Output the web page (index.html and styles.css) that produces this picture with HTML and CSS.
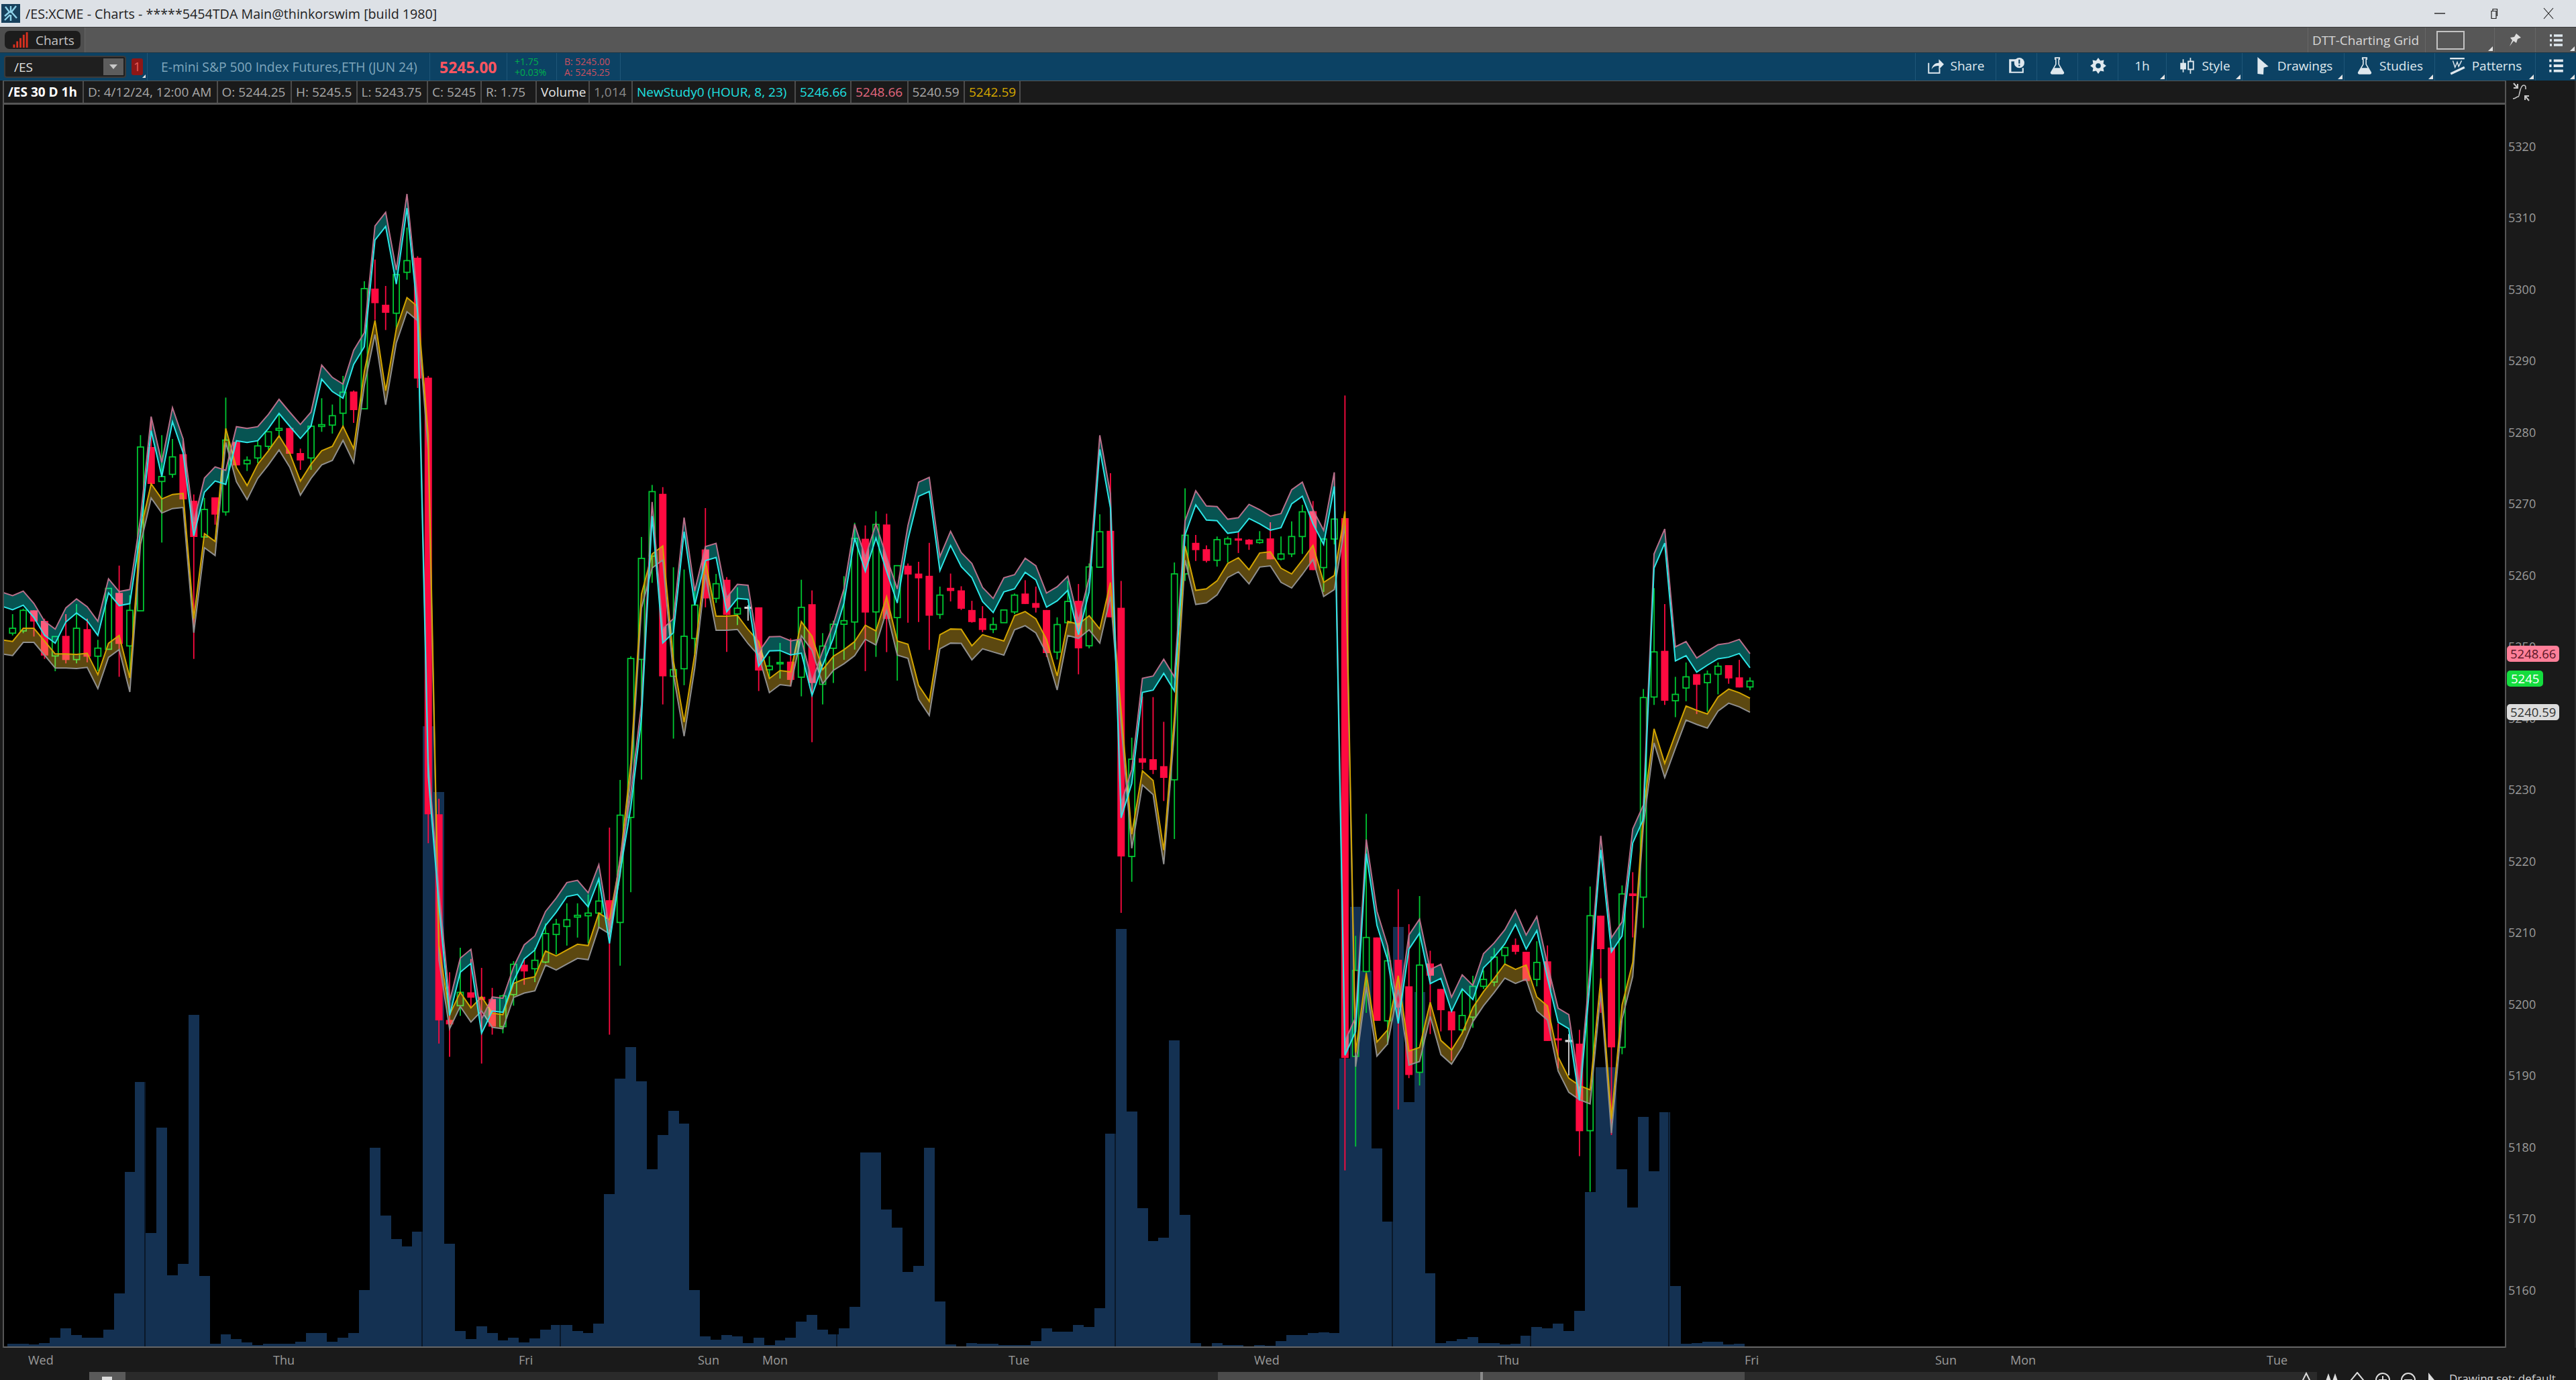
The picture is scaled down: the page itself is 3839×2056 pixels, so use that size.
FILE: index.html
```html
<!DOCTYPE html>
<html lang="en">
<head>
    <meta charset="UTF-8">
    <meta name="viewport" content="width=device-width, initial-scale=1.0">
    <title>/ES:XCME - Charts</title>
    <link rel="stylesheet" href="styles.css">
</head>
<body>
    <header class="titlebar">
        <svg class="app-logo" viewBox="0 0 28 28">
            <rect width="28" height="28" fill="#17405c"/>
            <path d="M6 4l6 8-7 6M22 3l-7 9 8 9M12 12l3 0M14 3v8M14 16v9M5 24l8-8" stroke="#8fd3ea" stroke-width="2.4" fill="none"/>
        </svg>
        <span class="title-text">/ES:XCME - Charts - *****5454TDA Main@thinkorswim [build 1980]</span>
        <div class="window-controls">
            <svg viewBox="0 0 18 18"><path d="M1 9h16" stroke="#222" stroke-width="1.4"/></svg>
            <svg viewBox="0 0 18 18"><path d="M5 5.5h7v11H5zM7 5V2.500h6.500V13" stroke="#222" stroke-width="1.2" fill="none"/></svg>
            <svg viewBox="0 0 18 18"><path d="M2 1l14 16M16 1L2 17" stroke="#222" stroke-width="1.1"/></svg>
        </div>
    </header>

    <div class="tabrow">
        <div class="tab-cell">
            <div class="tab-btn">
                <svg class="bars-icon" viewBox="0 0 24 24">
                    <path d="M0 24v-5h3v5zM5 24V14h3v10zM10 24V9h3v15zM15 24V4h3v20zM20 24V0h3v24z" fill="#d8301f"/>
                </svg>
                <span>Charts</span>
            </div>
        </div>
        <div class="tab-right">
            <span class="grid-name">DTT-Charting Grid</span>
            <div class="grid-box corner"><span class="grid-square"></span></div>
            <div class="pin-box">
                <svg class="icon-sm" viewBox="0 0 24 24"><path d="M14 2l7 6-5 2-2 6-4-3-6 8 4-9-3-4 6-1z" fill="#ddd"/></svg>
            </div>
            <div class="pin-box menu-box corner">
                <svg class="icon-sm" viewBox="0 0 24 24"><use href="#list-icon"/></svg>
            </div>
        </div>
    </div>

    <div class="toolbar">
        <div class="symbol-box">
            <span>/ES</span>
            <span class="drop-btn"></span>
        </div>
        <div class="link-badge corner">1</div>
        <div class="quote-cell desc-cell">E-mini S&amp;P 500 Index Futures,ETH (JUN 24)</div>
        <div class="quote-cell last-cell">5245.00</div>
        <div class="quote-cell change-cell"><span>+1.75</span><span>+0.03%</span></div>
        <div class="quote-cell bidask-cell"><span>B: 5245.00</span><span>A: 5245.25</span></div>
        <div class="tools">
            <div class="tool">
                <svg class="icon" viewBox="0 0 24 24"><path d="M3 8v14h15v-6" stroke="#dfe8ee" stroke-width="1.8" fill="none"/><path d="M7 17c1-6 5-9 10-9V3l7 7-7 7v-5c-4 0-8 1-10 5z" fill="#dfe8ee"/></svg>
                <span>Share</span>
            </div>
            <div class="tool">
                <svg class="icon" viewBox="0 0 24 24"><path d="M2 3h12v3H5v14h15v-5h2v7H2z" fill="#dfe8ee"/><circle cx="16" cy="8" r="7" fill="#dfe8ee"/><path d="M16 3.500v5.500M16 10.500v2" stroke="#0c4264" stroke-width="2"/></svg>
            </div>
            <div class="tool">
                <svg class="icon" viewBox="0 0 24 24"><use href="#flask-icon"/></svg>
            </div>
            <div class="tool">
                <svg class="icon" viewBox="0 0 24 24">
                    <polygon points="12,1 14.9,5 19.800,4.200 19,9.100 23,12 19,14.900 19.800,19.800 14.900,19 12,23 9.100,19 4.200,19.800 5,14.900 1,12 5,9.100 4.200,4.200 9.100,5" fill="#dfe8ee"/>
                    <circle cx="12" cy="12" r="3.500" fill="#0c4264"/>
                </svg>
            </div>
            <div class="tool corner"><span>1h</span></div>
            <div class="tool corner">
                <svg class="icon" viewBox="0 0 24 24">
                    <path d="M7 3v18" stroke="#dfe8ee" stroke-width="1.6"/><rect x="3" y="8" width="8" height="9" fill="#dfe8ee"/>
                    <path d="M17 1v22" stroke="#dfe8ee" stroke-width="1.6"/><rect x="14" y="6" width="7" height="11" fill="#0c4264" stroke="#dfe8ee" stroke-width="1.8"/>
                </svg>
                <span>Style</span>
            </div>
            <div class="tool corner">
                <svg class="icon" viewBox="0 0 24 24"><path d="M5 0l15 13-6.500 1.500L13 24l-8-1z" fill="#dfe8ee"/></svg>
                <span>Drawings</span>
            </div>
            <div class="tool corner">
                <svg class="icon" viewBox="0 0 24 24"><use href="#flask-icon"/></svg>
                <span>Studies</span>
            </div>
            <div class="tool corner">
                <svg class="icon" viewBox="0 0 24 24">
                    <path d="M2 2h20" stroke="#dfe8ee" stroke-width="2.200"/>
                    <path d="M6 5l3 9 3-7 2 6 4-8" stroke="#dfe8ee" stroke-width="1.300" fill="none"/>
                    <path d="M3 23l19-9" stroke="#dfe8ee" stroke-width="3"/>
                </svg>
                <span>Patterns</span>
            </div>
            <div class="tool corner">
                <svg class="icon" viewBox="0 0 24 24"><use href="#list-icon"/></svg>
            </div>
        </div>
    </div>

    <div class="workspace">
        <div class="chart-col">
            <div class="legend">
                <span class="leg-cell leg-symbol">/ES 30 D 1h</span>
                <span class="leg-cell">D: 4/12/24, 12:00 AM</span>
                <span class="leg-cell">O: 5244.25</span>
                <span class="leg-cell">H: 5245.5</span>
                <span class="leg-cell">L: 5243.75</span>
                <span class="leg-cell">C: 5245</span>
                <span class="leg-cell">R: 1.75</span>
                <span class="leg-cell leg-white">Volume</span>
                <span class="leg-cell leg-dim">1,014</span>
                <span class="leg-cell leg-cyan">NewStudy0 (HOUR, 8, 23)</span>
                <span class="leg-cell leg-cyan">5246.66</span>
                <span class="leg-cell leg-pink">5248.66</span>
                <span class="leg-cell">5240.59</span>
                <span class="leg-cell leg-gold">5242.59</span>
                <span class="leg-rest"></span>
            </div>
            <svg id="plot" class="plot" viewBox="6 156 3727 1850"></svg>
        </div>

        <div class="price-axis">
            <svg class="fit-icon" viewBox="0 0 28 28" fill="none" stroke="#c8c8c8">
                <path d="M3 1l6 7M9 2v6H3" stroke-width="2"/>
                <path d="M2 24c5 0 5-3 8-3 2 0 2-17 8-17 3 0 3 2 3 6" stroke-width="1.600"/>
                <path d="M26 27l-6-7M20 26v-6h6" stroke-width="2"/>
            </svg>
            <div class="tick">5320</div>
            <div class="tick">5310</div>
            <div class="tick">5300</div>
            <div class="tick">5290</div>
            <div class="tick">5280</div>
            <div class="tick">5270</div>
            <div class="tick">5260</div>
            <div class="tick">5250</div>
            <div class="tick">5240</div>
            <div class="tick">5230</div>
            <div class="tick">5220</div>
            <div class="tick">5210</div>
            <div class="tick">5200</div>
            <div class="tick">5190</div>
            <div class="tick">5180</div>
            <div class="tick">5170</div>
            <div class="tick">5160</div>
            <span class="bubble bubble-pink">5248.66</span>
            <span class="bubble bubble-green">5245</span>
            <span class="bubble bubble-gray">5240.59</span>
        </div>
    </div>

    <div class="time-axis">
        <span class="day" style="width:365px">Wed</span>
        <span class="day" style="width:366px">Thu</span>
        <span class="day" style="width:267px">Fri</span>
        <span class="day" style="width:96px">Sun</span>
        <span class="day" style="width:367px">Mon</span>
        <span class="day" style="width:366px">Tue</span>
        <span class="day" style="width:363px">Wed</span>
        <span class="day" style="width:368px">Thu</span>
        <span class="day" style="width:284px">Fri</span>
        <span class="day" style="width:112px">Sun</span>
        <span class="day" style="width:382px">Mon</span>
        <span class="day">Tue</span>
    </div>

    <div class="scroll-row">
        <div class="scroll-btn"><span></span></div>
        <div class="scroll-track">
            <div class="scroll-thumb"></div>
        </div>
        <div class="status">
            <svg class="status-icon" viewBox="0 0 24 24"><path d="M12 2l10 20H2z" fill="none" stroke="#ddd" stroke-width="2"/></svg>
            <svg class="status-icon" viewBox="0 0 24 24"><path d="M7 2l7 20H0zM17 2l7 20H10z" fill="#ddd"/></svg>
            <svg class="status-icon" viewBox="0 0 24 24"><path d="M12 1l9 11-9 11-9-11z" fill="none" stroke="#ddd" stroke-width="2"/></svg>
            <svg class="status-icon" viewBox="0 0 24 24"><circle cx="12" cy="12" r="10" fill="none" stroke="#ddd" stroke-width="2"/><path d="M12 6v12M6 12h12" stroke="#ddd" stroke-width="2"/></svg>
            <svg class="status-icon" viewBox="0 0 24 24"><circle cx="12" cy="12" r="10" fill="none" stroke="#ddd" stroke-width="2"/><path d="M6 12h12" stroke="#ddd" stroke-width="2"/></svg>
            <svg class="status-icon" viewBox="0 0 24 24"><path d="M4 1l18 22H4z" fill="#ddd"/></svg>
            <span class="status-text">Drawing set: default</span>
        </div>
    </div>

    <svg class="defs" width="0" height="0">
        <symbol id="flask-icon" viewBox="0 0 24 24">
            <path d="M9 1h6v2h-1v7l6.500 11c.5 1.200-.2 2-1.500 2H5c-1.300 0-2-.8-1.500-2L10 10V3H9z" fill="none" stroke="#dfe8ee" stroke-width="1.500"/>
            <path d="M7.500 15h9l4 6c.5 1.200-.2 2-1.500 2H5c-1.300 0-2-.8-1.500-2z" fill="#dfe8ee"/>
        </symbol>
        <symbol id="list-icon" viewBox="0 0 24 24">
            <path d="M3 5h3M9 5h13M3 12h3M9 12h13M3 19h3M9 19h13" stroke="#dfe8ee" stroke-width="3.500"/>
        </symbol>
    </svg>

    <script src="chart.js"></script>
</body>
</html>
```

FILE: styles.css
```css
* {
    box-sizing: border-box;
}

html, body {
    margin: 0;
    height: 100%;
}

body {
    display: flex;
    flex-direction: column;
    height: 2056px;
    overflow: hidden;
    background-color: #1a1a1a;
    font-family: "Open Sans", sans-serif;
    font-size: 19px;
    color: #a8a8a8;
}

.defs {
    position: absolute;
}

/* window title */
.titlebar {
    display: flex;
    align-items: center;
    flex: 0 0 41px;
    padding-left: 2px;
    background-color: #dde1e6;
    border-bottom: 1px solid #3a3a3a;
    color: #222;
}

.app-logo {
    width: 28px;
    height: 28px;
}

.title-text {
    margin-left: 8px;
    font-size: 19.700px;
}

.window-controls {
    display: flex;
    gap: 63px;
    margin-left: auto;
    margin-right: 32px;
}

.window-controls svg {
    width: 18px;
    height: 18px;
}

/* tab row */
.tabrow {
    display: flex;
    flex: 0 0 37px;
    background-color: #575757;
}

.tab-cell {
    display: flex;
    align-items: center;
    width: 127px;
    padding-left: 7px;
    background-color: #4e4e4e;
    border-right: 1px solid #666;
}

.tab-btn {
    display: flex;
    align-items: center;
    gap: 10px;
    width: 113px;
    height: 27px;
    padding-left: 12px;
    background-color: #1c1c1c;
    border-radius: 7px;
    color: #c4c4c4;
}

.bars-icon {
    width: 24px;
    height: 23px;
}

.tab-right {
    display: flex;
    align-items: stretch;
    margin-left: auto;
    color: #d8d8d8;
}

.grid-name {
    display: flex;
    align-items: center;
    width: 176px;
    padding-left: 6px;
    border-left: 1px solid #666;
    border-right: 1px solid #666;
}

.grid-box {
    display: flex;
    align-items: center;
    width: 103px;
    padding-left: 16px;
    border-right: 1px solid #666;
}

.grid-square {
    width: 42px;
    height: 28px;
    border: 2px solid #c4c4c4;
}

.pin-box {
    display: flex;
    align-items: center;
    justify-content: center;
    width: 61px;
    border-right: 1px solid #666;
}

.menu-box {
    width: 60px;
    border-right: 0;
}

.icon-sm {
    width: 24px;
    height: 24px;
}

/* little white triangle in the lower corner of a menu button */
.corner {
    position: relative;
}

.corner::after {
    content: "";
    position: absolute;
    right: 2px;
    bottom: 2px;
    border-left: 7px solid transparent;
    border-bottom: 7px solid #e4e4e4;
}

/* blue toolbar */
.toolbar {
    display: flex;
    align-items: stretch;
    flex: 0 0 42px;
    background-color: #0c4264;
    border-top: 1px solid #1b3647;
}

.symbol-box {
    display: flex;
    align-items: center;
    justify-content: space-between;
    width: 182px;
    height: 33px;
    margin: 4px 0 0 6px;
    padding: 0 2px 0 13px;
    background-color: #1f1f1f;
    border: 2px solid #3a3a3a;
    border-radius: 4px;
    color: #e2e2e2;
}

.drop-btn {
    position: relative;
    width: 30px;
    height: 25px;
    background-color: #5d5d5d;
}

.drop-btn::after {
    content: "";
    position: absolute;
    left: 9px;
    top: 9px;
    border-left: 6px solid transparent;
    border-right: 6px solid transparent;
    border-top: 7px solid #c8c8c8;
}

.link-badge {
    align-self: center;
    width: 17px;
    height: 25px;
    margin: 0 6px 0 8px;
    background-color: #8e1717;
    border-radius: 3px;
    color: #e85a5a;
    line-height: 25px;
    text-align: center;
}

.link-badge::after {
    right: -4px;
    bottom: -4px;
    border-left-width: 5px;
    border-bottom-width: 5px;
}

.quote-cell {
    display: flex;
    align-items: center;
    border-left: 1px solid #1f5678;
}

.desc-cell {
    width: 421px;
    padding-left: 20px;
    color: #7fa6bc;
    font-size: 19.300px;
    white-space: nowrap;
}

.last-cell {
    width: 115px;
    padding-left: 14px;
    color: #ff5560;
    font-size: 23px;
    font-weight: 700;
}

.change-cell,
.bidask-cell {
    flex-direction: column;
    align-items: flex-start;
    justify-content: center;
    color: #00b04c;
    font-size: 14px;
    line-height: 16px;
}

.change-cell {
    width: 74px;
    padding-left: 11px;
}

.bidask-cell {
    width: 96px;
    padding-left: 11px;
    border-right: 1px solid #1f5678;
    color: #cc5060;
}

.tools {
    display: grid;
    grid-template-columns: 120px 61px 61px 60px 72px 113px 152px 135px 150px 61px;
    margin-left: auto;
}

.tool {
    display: flex;
    align-items: center;
    justify-content: center;
    gap: 9px;
    padding-bottom: 3px;
    border-left: 1px solid #1f5678;
    color: #dfe8ee;
}

.icon {
    width: 26px;
    height: 28px;
}

/* chart and axis */
.workspace {
    display: flex;
    flex: 1 1 auto;
    min-height: 0;
}

.chart-col {
    display: flex;
    flex-direction: column;
    flex: 1 1 auto;
    min-width: 0;
    margin-left: 4px;
    background-color: #000;
    border-left: 2px solid #555;
}

.legend {
    display: grid;
    grid-template-columns: 119px 199.500px 110.500px 97.500px 105.500px 80px 82px 79px 64px 243px 83px 84.500px 84.500px 83px 1fr;
    flex: 0 0 36px;
    background-color: #1a1a1a;
    border-top: 1px solid #555;
    border-bottom: 3px solid #555;
}

.leg-cell {
    padding-left: 6px;
    border-right: 2px solid #4c4c4c;
    line-height: 32px;
    white-space: nowrap;
    overflow: hidden;
}

.leg-symbol {
    color: #fff;
    font-weight: 700;
}

.leg-white {
    color: #e4e4e4;
}

.leg-dim {
    color: #8a8a8a;
}

.leg-cyan {
    color: #1fe0e0;
}

.leg-pink {
    color: #e2687f;
}

.leg-gold {
    color: #d6a800;
}

.plot {
    display: block;
    flex: 1 1 auto;
    min-height: 0;
    width: 100%;
    border-bottom: 2px solid #666;
    filter: blur(0.5px);
}

.plot .band {
    mix-blend-mode: screen;
}

.price-axis {
    position: relative;
    flex: 0 0 106px;
    padding: 44.750px 0 0 3px;
    border-left: 2px solid #555;
    border-right: 2px solid #2c2c2c;
    color: #9a9a9a;
    font-size: 18px;
}

.fit-icon {
    position: absolute;
    left: 8px;
    top: 3px;
    width: 28px;
    height: 28px;
}

.tick {
    height: 106.500px;
    line-height: 106.500px;
}

.bubble {
    position: absolute;
    left: 1px;
    padding: 0 5px;
    border-radius: 5px;
    font-size: 18.500px;
    line-height: 24px;
}

.bubble-pink {
    top: 842px;
    background-color: #ff7f99;
    color: #5a1526;
}

.bubble-green {
    top: 879px;
    padding: 0 6px;
    background-color: #14dc3e;
    color: #fff;
}

.bubble-gray {
    top: 929px;
    background-color: #dcdcdc;
    color: #333;
}

/* time axis and scroller */
.time-axis {
    display: flex;
    align-items: center;
    flex: 0 0 36px;
    padding-left: 42px;
    color: #9a9a9a;
    font-size: 18px;
}

.day {
    flex: none;
}

.scroll-row {
    display: flex;
    flex: 0 0 12px;
    overflow: hidden;
    background-color: #1a1a1a;
}

.scroll-btn {
    flex: none;
    width: 54px;
    height: 24px;
    margin-left: 133px;
    padding: 7px 0 0 19px;
    background-color: #5a5a5a;
}

.scroll-btn span {
    display: block;
    width: 15px;
    height: 5px;
    background-color: #ddd;
}

.scroll-track {
    flex: 0 0 3266px;
    padding-left: 1628px;
    background-color: #2a2a2a;
}

.scroll-thumb {
    position: relative;
    width: 785px;
    height: 24px;
    background-color: #4b4b4b;
}

.scroll-thumb::after {
    content: "";
    position: absolute;
    left: 391px;
    top: 0;
    width: 4px;
    height: 24px;
    background-color: #8a8a8a;
}

.status {
    display: flex;
    align-items: flex-start;
    gap: 14px;
    flex: none;
    margin-left: -28px;
    color: #d4d4d4;
    font-size: 17px;
}

.status-icon {
    width: 24px;
    height: 24px;
    flex: none;
}

.status-text {
    margin-left: -3px;
    line-height: 20px;
    white-space: nowrap;
}
```

FILE: chart.js
```js
// 30 days of hourly /ES, y values are kept as read per block: y = top + v / scale
const PITCH = 15.885;
const FIRST_X = 18.75;
const BAND = 21; // distance cyan-pink and gold-gray
const FLOOR = 2006;
const NS = "http://www.w3.org/2000/svg";

// candle: [direction, bodyTop, bodyBottom, wickTop, wickBottom], 1 up, 0 down, 2 doji
const blocks = [
    {
        top: 560, scale: 3,
        cyan: [1045,1025,1080,1160,1195,1100,1060,1095,1160,970,1027,1018,700,245,450,205,345,715,520,470,485,290,298,290,235,168,225,280,225,15,70,100,-51],
        gold: [1187,1128,1128,1185,1243,1243,1245,1240,1335,1195,1160,1350,690,483,550,530,525,1085,705,740,235,410,490,395,335,268,345,470,395,335,315,225,325],
        candles: [
            [1,1128,1150,1065,1160],[1,1048,1140,1040,1150],[0,1048,1098,1048,1165],[0,1095,1250,1085,1265],
            [1,1165,1252,1165,1320],[0,1162,1270,1065,1285],[1,1128,1268,1020,1285],[0,1132,1255,1085,1280],
            [1,1217,1253,1180,1320],[1,950,1222,950,1222],[0,970,1198,848,1345],[1,1048,1207,980,1350],
            [1,318,1050,265,1050],[0,318,483,200,490],[1,450,472,265,745],[1,362,440,282,455],
            [0,350,552,280,552],[0,558,720,530,1265],[1,597,720,545,720],[0,543,620,543,665],
            [1,287,608,97,625],[0,295,400,295,400],[1,377,393,360,425],[1,313,367,290,390],
            [1,250,315,250,330],[1,235,243,170,270],[0,233,348,233,348],[0,345,378,325,420],
            [1,225,367,225,420],[1,218,226,100,250],[1,178,220,128,258],[1,73,167,0,230],[0,70,153,65,210]
        ]
    },
    {
        top: 260, scale: 3,
        cyan: [770,293,232,490,150,620],
        gold: [880,652,966,690,550,590],
        candles: [
            [1,510,1047,477,1047],[0,510,575,380,650],[0,582,618,498,695],
            [1,447,620,447,690],[1,385,437,237,470],[0,372,912,365,954]
        ]
    },
    {
        top: 560, scale: 1.508,
        cyan: [900,1190,1437,1340,1320,1477,1427,1430,1360,1310,1290,1235,1205,1170,1165,1193,1130,1275,1115,970,770,315,600,577,350,515,415,408,530,500,502,652,618,617,627,623,718,650,590,510,365],
        gold: [135,1280,1435,1385,1420,1395,1432,1435,1365,1355,1350,1292,1303,1290,1277,1280,1207,1222,1090,870,490,400,382,640,778,625,415,540,540,538,570,597,680,662,665,552,585,660,630,615,597],
        candles: [
            [0,4,985,0,1050],[0,985,1448,950,1500],[0,1447,1457,1340,1530],[1,1385,1415,1285,1438],
            [0,1385,1397,1310,1420],[0,1395,1402,1330,1545],[0,1400,1462,1375,1480],[1,1393,1462,1390,1477],
            [1,1322,1390,1315,1415],[0,1323,1338,1310,1368],[1,1313,1332,1285,1362],[1,1253,1317,1230,1320],
            [1,1232,1255,1220,1300],[1,1222,1237,1185,1280],[1,1212,1216,1185,1262],[1,1207,1213,1165,1275],
            [1,1180,1207,1130,1240],[0,1178,1220,1015,1480],[1,987,1228,908,1325],[1,635,992,630,1160],
            [1,410,637,362,907],[1,260,405,245,465],[0,265,675,250,738],[1,660,675,430,815],
            [1,585,658,435,695],[1,515,590,480,625],[0,390,500,297,520],[1,467,500,445,510],
            [0,458,537,452,620],[1,522,535,475,560],[2,520,522,515,550],[0,520,662,520,708],
            [1,652,660,630,680],[1,644,647,600,680],[0,642,683,590,698],[1,520,677,458,720],
            [0,513,690,482,823],[1,607,693,578,738],[1,558,612,550,690],[1,550,558,450,638],[1,365,553,330,615]
        ]
    },
    {
        top: 620, scale: 2.119,
        cyan: [490,385,490,590,390,253,238,488,408,475,510,585,620,555,545,493,517,603,583,550,690,555,105,290,1268,1160,872,865,812,868,375,280,328,330,370,365,323,340,360,352,277,253,340,405,222],
        gold: [660,678,570,710,720,850,900,690,672,673,725,690,700,710,630,617,640,705,820,648,657,630,672,525,930,1320,1120,1150,1370,950,410,550,545,520,465,447,485,432,428,480,498,455,408,525,503],
        candles: [
            [0,387,620,345,805],[1,342,618,300,760],[0,342,640,308,745],[1,472,636,472,835],
            [0,472,500,465,652],[0,497,512,460,650],[0,504,630,400,738],[1,565,626,538,640],
            [0,542,552,497,585],[0,550,608,537,612],[0,612,650,583,652],[0,638,675,600,682],
            [1,658,673,635,685],[1,612,652,612,652],[1,565,618,560,625],[0,560,593,518,593],
            [0,590,605,538,620],[0,612,748,612,760],[1,658,745,635,768],[1,585,652,520,655],
            [0,583,733,530,815],[1,476,725,465,733],[1,365,477,310,477],[0,362,635,180,635],
            [0,605,1390,520,1568],[1,1083,1390,1015,1470],[0,1080,1094,885,1115],[0,1083,1117,887,1130],
            [0,1105,1142,965,1215],[1,498,1148,462,1335],[1,376,498,228,520],[0,400,423,375,457],
            [0,420,457,408,462],[1,390,455,380,475],[1,387,404,380,462],[0,386,393,365,432],
            [0,390,405,388,422],[1,391,399,363,403],[0,386,452,335,452],[1,435,451,380,455],
            [1,380,435,332,445],[1,302,380,280,435],[0,300,486,268,486],[1,388,478,385,555],[1,325,388,322,405]
        ]
    },
    {
        top: 560, scale: 1.2645,
        cyan: [1280,1235,900,1035,1100,1220,1080,1050,1145,1135,1197,1155,1175,1115,1095,1070,1033,1080,1045,1135,1218,1230,1365,1140,893,1085,1055,880,835,362,315,537,527,558,545,533,530,523,550],
        gold: [255,1275,1125,1255,1232,1130,1272,1265,1180,1252,1270,1238,1190,1160,1135,1108,1118,1110,1170,1187,1283,1323,1337,1345,1135,1400,1185,1105,820,665,730,675,622,630,637,605,590,597,607],
        candles: [
            [0,268,1285,37,1497],[1,1120,1282,1055,1452],[1,1058,1122,825,1200],[0,1058,1215,1058,1215],
            [1,1102,1215,1075,1260],[0,1100,1190,967,1382],[0,1150,1317,1033,1323],[1,1110,1312,980,1337],
            [0,1107,1130,1083,1240],[0,1155,1195,1155,1235],[0,1197,1233,1197,1290],[1,1205,1232,1155,1240],
            [1,1150,1208,1130,1228],[1,1137,1150,1120,1155],[1,1095,1142,1078,1150],[1,1077,1092,1077,1110],
            [0,1072,1085,1060,1090],[0,1085,1140,1085,1140],[1,1105,1137,1065,1150],[0,1103,1253,1073,1253],
            [0,1248,1252,1220,1305],[2,1252,1254,1240,1318],[0,1258,1423,1232,1470],[1,1017,1422,962,1537],
            [0,1017,1080,1017,1200],[0,1077,1265,1077,1430],[1,976,1265,960,1278],[0,975,980,935,1058],
            [1,606,982,590,1040],[1,520,605,400,620],[0,518,612,430,620],[1,600,612,567,643],
            [1,567,588,540,613],[0,562,582,562,637],[1,562,578,555,633],[1,547,562,540,600],
            [0,545,570,545,580],[0,568,587,535,587],[1,575,586,568,592]
        ]
    }
];

// top of each volume bar as y = 1200 + v / 1.936
const volume = [1553,1553,1555,1550,1535,1508,1528,1535,1535,1512,1407,1058,798,1233,930,1355,1322,604,1358,1552,1525,1540,1548,1556,1553,1553,1553,1547,1522,1522,1547,1535,1522,1397,987,1183,1250,1272,1230,-228,-39,1265,1515,1540,1502,1522,1543,1535,1548,1538,1512,1498,1498,1515,1522,1495,1120,788,696,795,1050,950,880,917,1397,1532,1542,1528,1532,1550,1535,1556,1543,1535,1488,1470,1512,1525,1508,1447,1000,1000,1165,1217,1345,1328,987,1430,1555,1560,1550,1553,1553,1556,1556,1556,1545,1508,1518,1518,1498,1505,1450,946,357,882,1162,1257,1247,678,1180,1550,1560,1550,1556,1556,1560,1556,1558,1545,1528,1528,1522,1520,1522,730,293,476,990,1200,350,855,538,1350,1550,1545,1540,1533,1550,1550,1555,1552,1530,1505,1508,1495,1515,1458,1115,755,755,1050,1160,898,1055,885,1387,1552,1550,1547,1547,1555,1553,1560];

const dividers = [216, 629, 835, 1247, 1662, 1868, 2075, 2281, 2487];

const plot = document.getElementById("plot");

function add(tag, attrs) {
    const el = document.createElementNS(NS, tag);
    for (const key in attrs) {
        el.setAttribute(key, attrs[key]);
    }
    plot.appendChild(el);
    return el;
}

function xOf(i) {
    return FIRST_X + i * PITCH;
}

// flatten the blocks into page coordinates
const cyan = [];
const gold = [];
const candles = [];
blocks.forEach(block => {
    const toY = v => block.top + v / block.scale;
    block.cyan.forEach(v => cyan.push(toY(v)));
    block.gold.forEach(v => gold.push(toY(v)));
    block.candles.forEach(c => candles.push([c[0], toY(c[1]), toY(c[2]), toY(c[3]), toY(c[4])]));
});

// lines start left of the first full candle
const startCyan = 560 + 1030 / 3;
const startGold = 560 + 1180 / 3;

function points(values, start, shift) {
    const list = [`${xOf(-1)},${start + shift}`];
    values.forEach((y, i) => list.push(`${xOf(i)},${y + shift}`));
    return list;
}

function drawBand(values, start, shift, fill, near, far) {
    const a = points(values, start, 0);
    const b = points(values, start, shift);
    add("polygon", { points: a.concat(b.slice().reverse()).join(" "), fill: fill, class: "band" });
    add("polyline", { points: b.join(" "), fill: "none", stroke: far, "stroke-width": 2 });
    add("polyline", { points: a.join(" "), fill: "none", stroke: near, "stroke-width": 2 });
}

// volume
volume.forEach((v, i) => {
    const y = 1200 + v / 1.936;
    const left = Math.round(xOf(i) - PITCH / 2);
    const right = Math.round(xOf(i) + PITCH / 2);
    add("rect", { x: left, y: y, width: right - left, height: FLOOR - y, fill: "#143152", "shape-rendering": "crispEdges" });
});

dividers.forEach(x => {
    add("line", { x1: x, x2: x, y1: 156, y2: FLOOR, stroke: "#000", "stroke-width": 1 });
});

// candles
const COLORS = ["#ff0a40", "#00c832", "#d8d8d8"];
candles.forEach((c, i) => {
    const x = xOf(i);
    const color = COLORS[c[0] === 2 ? 2 : c[0] === 1 ? 1 : 0];
    add("line", { x1: x, x2: x, y1: c[3], y2: c[4], stroke: color, "stroke-width": 1.8 });
    if (c[0] === 0) {
        add("rect", { x: x - 5.5, y: c[1], width: 11, height: c[2] - c[1], fill: color });
    } else {
        add("rect", { x: x - 4.5, y: c[1], width: 9, height: c[2] - c[1], fill: "#000", stroke: color, "stroke-width": 1.8 });
    }
});

// study bands
drawBand(gold, startGold, BAND, "#5c4810", "#d2a400", "#8f8f8f");
drawBand(cyan, startCyan, -BAND, "#075452", "#2ce6e6", "#b86f8a");
```
